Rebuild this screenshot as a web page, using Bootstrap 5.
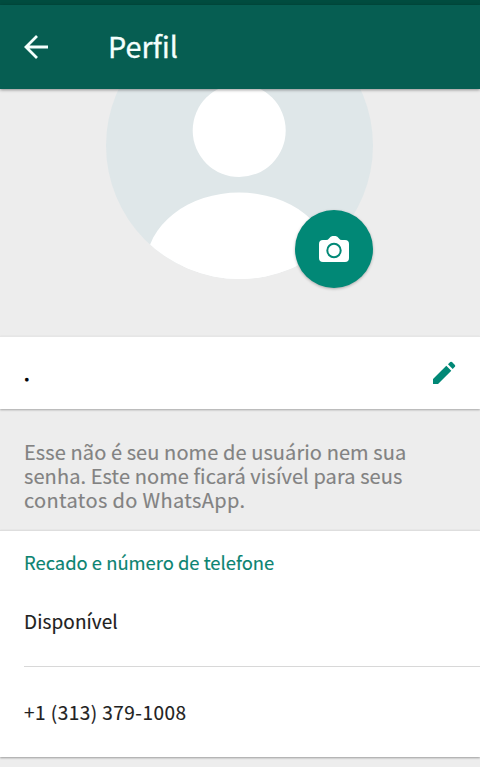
<!DOCTYPE html>
<html lang="pt-BR">
<head>
<meta charset="utf-8">
<meta name="viewport" content="width=device-width, initial-scale=1">
<title>Perfil</title>
<link href="https://cdn.jsdelivr.net/npm/bootstrap@5.3.0/dist/css/bootstrap.min.css" rel="stylesheet">
<style>
body{font-family:"Noto Sans CJK SC","Noto Sans",sans-serif;background:#ededed;height:767px;color:#212121;-webkit-text-stroke:.15px currentColor}
.status-strip{height:5px;background:#004c3f}
.app-bar{height:84px;background:#065e52;box-shadow:0 1px 3px rgba(0,0,0,.4);z-index:2;padding-left:24px}
.app-title{font-size:28.8px;line-height:40px;margin-left:60px;padding-bottom:2px;color:#f4fffd;-webkit-text-stroke-width:.3px}
.photo-area{height:247px;padding-right:2px}
.avatar{width:267px;height:267px;margin-top:-77.5px}
.camera-btn{width:78px;height:78px;right:0;bottom:-9.5px;background:#018876;box-shadow:0 1px 3px rgba(0,0,0,.28)}
.name-row{height:73px;padding:0 24px;box-shadow:0 1px 2px rgba(0,0,0,.3);border-top:1px solid #e6e6e6;font-size:20px}
.name-dot{color:#000;-webkit-text-stroke-width:.9px}
.note{height:121px;padding:31px 24px 0;font-size:20px;line-height:24px;color:#828282;letter-spacing:.09px}
.note-end{letter-spacing:.36px}
.about{height:227px;border-top:1px solid #dedede;box-shadow:0 1px 2px rgba(0,0,0,.35);padding-left:24px;font-size:19px}
.about-head{height:63px;color:#0b8371;font-size:18.4px}
.about-status{height:72px;padding-top:13px;letter-spacing:.08px}
.about-line{border-top:1px solid #d8d8d8;height:91px;letter-spacing:.47px}
</style>
</head>
<body class="m-0 overflow-hidden d-flex flex-column">
<div class="status-strip flex-shrink-0"></div>
<header class="app-bar d-flex align-items-center flex-shrink-0 position-relative">
  <svg width="24" height="24" viewBox="0 0 24 24" fill="none" stroke="#f4fffd" stroke-width="2.8"><path d="M24 12H2M13 1L2 12L13 23"/></svg>
  <h1 class="app-title fw-normal mb-0">Perfil</h1>
</header>
<section class="photo-area d-flex justify-content-center flex-shrink-0">
  <div class="avatar position-relative">
    <svg class="d-block" width="267" height="267" viewBox="0 0 267 267"><defs><clipPath id="disc"><circle cx="133.5" cy="133.5" r="133.5"/></clipPath></defs>
      <g clip-path="url(#disc)"><rect width="267" height="267" fill="#dfe7e9"/><circle cx="133.2" cy="118.500" r="46.500" fill="#fff"/><ellipse cx="133.2" cy="253.500" rx="93" ry="73" fill="#fff"/><rect x="40" y="253.500" width="187" height="20" fill="#fff"/></g></svg>
    <button class="camera-btn btn border-0 rounded-circle position-absolute p-0 d-flex align-items-center justify-content-center" aria-label="Câmera">
      <svg width="30" height="26" viewBox="0 0 30 26"><path d="M4 4h3Q9 4 10 2.500Q11.500 0 13.500 0h3Q18.500 0 20 2.500Q21 4 23 4h3a4 4 0 0 1 4 4v14a4 4 0 0 1-4 4H4a4 4 0 0 1-4-4V8a4 4 0 0 1 4-4Z" fill="#fff"/><circle cx="15" cy="14.500" r="6.700" fill="#fff" stroke="#018876" stroke-width="2"/></svg>
    </button>
  </div>
</section>
<section class="name-row bg-white d-flex align-items-center justify-content-between flex-shrink-0">
  <span class="name-dot">.</span>
  <svg width="24" height="24" viewBox="0 0 24 24" fill="#018876"><path d="M1 18L14.300 4.700L19.300 9.700L6 23H1ZM16 3.300L18.200 1.100Q19.100.300 20 1.100L22.900 4Q23.700 4.900 22.900 5.800L20.700 8Z"/></svg>
</section>
<p class="note mb-0 flex-shrink-0"><span class="d-block">Esse não é seu nome de usuário nem sua</span><span class="d-block">senha. Este nome ficará visível para seus</span><span class="note-end d-block">contatos do WhatsApp.</span></p>
<section class="about bg-white flex-shrink-0">
  <div class="about-head d-flex align-items-center"><span>Recado e número de telefone</span></div>
  <div class="about-status d-flex align-items-start"><span>Disponível</span></div>
  <div class="about-line d-flex align-items-center"><span>+1 (313) 379-1008</span></div>
</section>
<script src="https://cdn.jsdelivr.net/npm/bootstrap@5.3.0/dist/js/bootstrap.bundle.min.js"></script>
</body>
</html>
